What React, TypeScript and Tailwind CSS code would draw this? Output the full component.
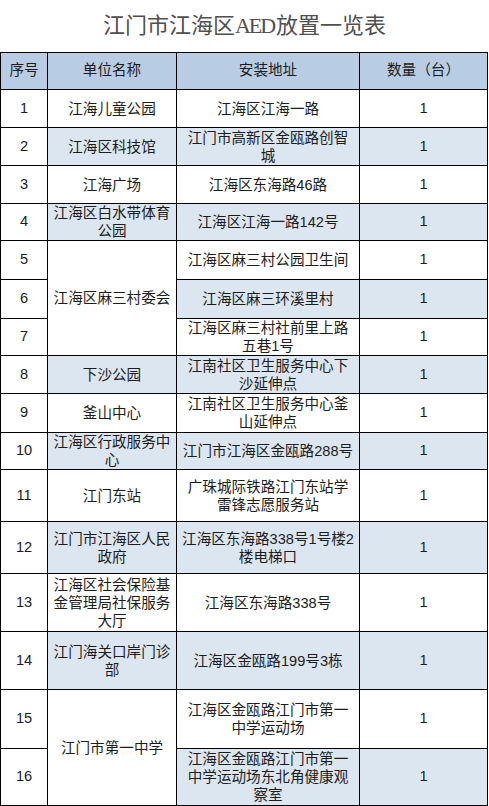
const rows = [
  { no: "1", name: ["江海儿童公园"], addr: ["江海区江海一路"] },
  { no: "2", name: ["江海区科技馆"], addr: ["江门市高新区金瓯路创智", "城"] },
  { no: "3", name: ["江海广场"], addr: ["江海区东海路46路"] },
  { no: "4", name: ["江海区白水带体育", "公园"], addr: ["江海区江海一路142号"] },
  { no: "5", name: ["江海区麻三村委会"], span: 3, addr: ["江海区麻三村公园卫生间"] },
  { no: "6", addr: ["江海区麻三环溪里村"] },
  { no: "7", addr: ["江海区麻三村社前里上路", "五巷1号"] },
  { no: "8", name: ["下沙公园"], addr: ["江南社区卫生服务中心下", "沙延伸点"] },
  { no: "9", name: ["釜山中心"], addr: ["江南社区卫生服务中心釜", "山延伸点"] },
  { no: "10", name: ["江海区行政服务中", "心"], addr: ["江门市江海区金瓯路288号"] },
  { no: "11", name: ["江门东站"], addr: ["广珠城际铁路江门东站学", "雷锋志愿服务站"] },
  { no: "12", name: ["江门市江海区人民", "政府"], addr: ["江海区东海路338号1号楼2", "楼电梯口"] },
  { no: "13", name: ["江海区社会保险基", "金管理局社保服务", "大厅"], addr: ["江海区东海路338号"] },
  { no: "14", name: ["江门海关口岸门诊", "部"], addr: ["江海区金瓯路199号3栋"] },
  { no: "15", name: ["江门市第一中学"], span: 2, addr: ["江海区金瓯路江门市第一", "中学运动场"] },
  { no: "16", addr: ["江海区金瓯路江门市第一", "中学运动场东北角健康观", "察室"] },
];

function Lines({ lines }: { lines: string[] }) {
  return (
    <div className="text-center leading-[18px] whitespace-nowrap">
      {lines.map((l, i) => (
        <div key={i}>{l}</div>
      ))}
    </div>
  );
}

const cell = "flex items-center justify-center";

export default function App() {
  return (
    <div
      className="w-[489px] h-[806px] bg-white text-[14.6px] text-[#1c1c1c]"
      style={{ fontFamily: '"Liberation Sans", "Noto Sans CJK SC", sans-serif' }}
    >
      <div
        className="h-[52px] flex items-center justify-center pb-[1px] text-[22px] text-[#505050]"
        style={{ fontFamily: '"Liberation Serif", "Noto Sans CJK SC", serif' }}
      >
        江门市江海区<span className="tracking-[-2px] pr-[2px]">AED</span>放置一览表
      </div>
      <div className="grid w-[488px] grid-cols-[46px_128px_182px_127px] grid-rows-[36px_37px_37px_37px_36px_38px_38px_36px_37px_38px_36px_51px_51px_57px_57px_58px_56px] gap-px border border-black bg-black">
        {["序号", "单位名称", "安装地址", "数量（台）"].map((h) => (
          <div key={h} className={`${cell} bg-[#b8cce4]`}>
            {h}
          </div>
        ))}
        {rows.map((r, i) => {
          const shade = i % 2 === 1 ? "bg-[#dce6f1]" : "bg-white";
          return [
            <div key={r.no + "a"} className={`${cell} bg-white`}>
              {r.no}
            </div>,
            r.name ? (
              <div
                key={r.no + "b"}
                className={`${cell} ${r.span ? "bg-white" : shade} ${r.span === 3 ? "row-span-3" : ""} ${r.span === 2 ? "row-span-2" : ""}`}
              >
                <Lines lines={r.name} />
              </div>
            ) : null,
            <div key={r.no + "c"} className={`${cell} ${shade}`}>
              <Lines lines={r.addr} />
            </div>,
            <div key={r.no + "d"} className={`${cell} ${shade}`}>
              1
            </div>,
          ];
        })}
      </div>
    </div>
  );
}
